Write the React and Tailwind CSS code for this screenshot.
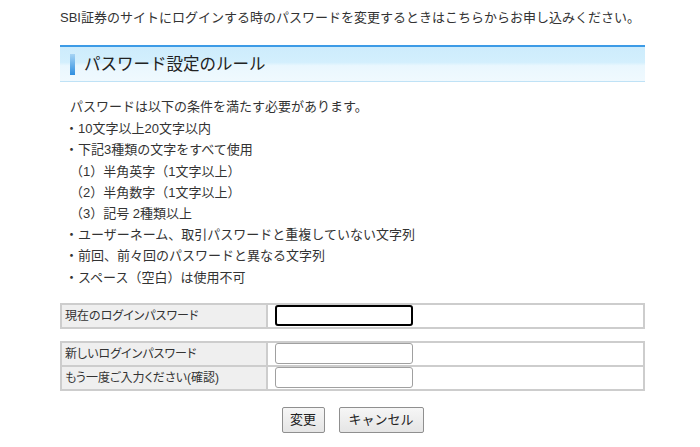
import { useState } from "react";

const rules = [
  { bullet: true, text: "10文字以上20文字以内" },
  { bullet: true, text: "下記3種類の文字をすべて使用" },
  { bullet: false, text: "（1）半角英字（1文字以上）" },
  { bullet: false, text: "（2）半角数字（1文字以上）" },
  { bullet: false, text: "（3）記号 2種類以上" },
  { bullet: true, text: "ユーザーネーム、取引パスワードと重複していない文字列" },
  { bullet: true, text: "前回、前々回のパスワードと異なる文字列" },
  { bullet: true, text: "スペース（空白）は使用不可" },
];

function Field({ label, value, onChange, focused, last }) {
  return (
    <div className={"flex " + (last ? "" : "border-b-2 border-[#cdcdcd]")}>
      <div className="flex w-[206px] items-center border-r-2 border-[#cdcdcd] bg-[#efefef] pl-[3px] text-[12px] leading-[22px] [font-feature-settings:'palt']">
        {label}
      </div>
      <div className="flex flex-1 items-center pl-[7px]">
        <input
          type="password"
          value={value}
          onChange={onChange}
          autoFocus={focused}
          className={
            "h-[21px] w-[138px] rounded-[3px] bg-white px-1 outline-none " +
            (focused ? "border-2 border-black" : "border border-[#a0a0a0]")
          }
        />
      </div>
    </div>
  );
}

export default function App() {
  const [current, setCurrent] = useState("");
  const [next, setNext] = useState("");
  const [confirm, setConfirm] = useState("");

  return (
    <div className="min-h-[447px] bg-white font-['Liberation_Sans','Noto_Sans_CJK_JP',sans-serif] text-[#333]">
      <div className="w-[645px] pl-[60px] pt-[8px]">
        <p className="text-[13px] leading-[20px]">
          SBI証券のサイトにログインする時のパスワードを変更するときはこちらからお申し込みください。
        </p>

        <div className="mt-[17px] flex h-[37px] items-center border-t-2 border-b border-t-[#3d9be6] border-b-[#bfe2f6] bg-[linear-gradient(to_bottom,#cdecfc_0%,#d3effd_45%,#e9f7fe_55%,#f0f9fe_100%)] pl-[10px]">
          <span className="h-[21px] w-[5px] bg-[linear-gradient(to_bottom,#a6d4f4,#2f8fe0)]" />
          <h2 className="ml-[9px] text-[16.5px] leading-[20px] text-[#222]">
            パスワード設定のルール
          </h2>
        </div>

        <div className="mt-[14px] pl-[10px] text-[13px] leading-[21.2px]">
          <p className="mb-[1px]">パスワードは以下の条件を満たす必要があります。</p>
          {rules.map((r) => (
            <p key={r.text}>
              {r.bullet && <span className="-ml-[5px]">・</span>}
              {r.text}
            </p>
          ))}
        </div>

        <div className="mt-[15px] border-2 border-[#cdcdcd]">
          <Field
            label="現在のログインパスワード"
            value={current}
            onChange={(e) => setCurrent(e.target.value)}
            focused
            last
          />
        </div>

        <div className="mt-[12px] border-2 border-[#cdcdcd]">
          <Field
            label="新しいログインパスワード"
            value={next}
            onChange={(e) => setNext(e.target.value)}
          />
          <Field
            label="もう一度ご入力ください(確認)"
            value={confirm}
            onChange={(e) => setConfirm(e.target.value)}
            last
          />
        </div>

        <div className="mt-[16px] flex justify-center gap-[14px]">
          <button className="h-[26px] w-[43px] rounded-[2px] border border-[#8f8f8f] bg-[linear-gradient(to_bottom,#f6f6f6,#e5e5e5)] text-[13px] text-[#222]">
            変更
          </button>
          <button className="h-[26px] w-[85px] rounded-[2px] border border-[#8f8f8f] bg-[linear-gradient(to_bottom,#f6f6f6,#e5e5e5)] text-[13px] text-[#222]">
            キャンセル
          </button>
        </div>
      </div>
    </div>
  );
}
